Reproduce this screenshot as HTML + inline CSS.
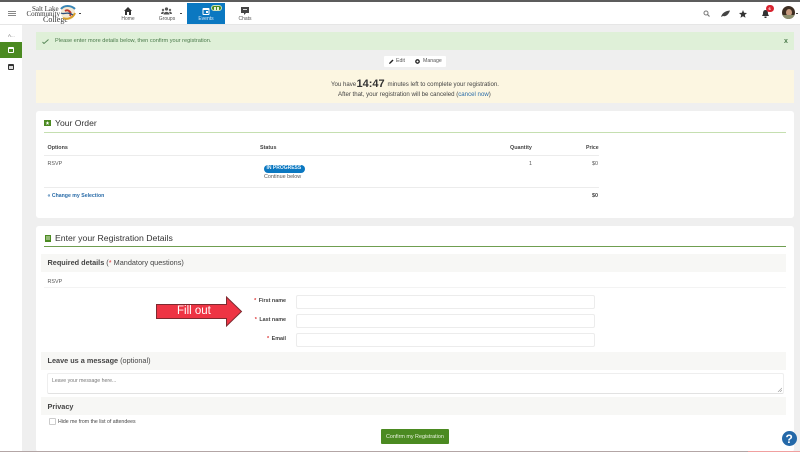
<!DOCTYPE html>
<html><head><meta charset="utf-8">
<style>
html,body{margin:0;padding:0;width:800px;height:452px;overflow:hidden;background:#efefef;font-family:"Liberation Sans",sans-serif;color:#333}
div,span,svg{position:absolute}
#w{left:0;top:0;width:800px;height:452px;overflow:hidden;filter:blur(.3px)}
.t{white-space:nowrap;line-height:1}
b{font-weight:bold}
i{font-style:normal}
.card{background:#fff;border-radius:3px}
.nl{font-size:5px;color:#555;transform:translateX(-50%)}
.sec{background:#f7f7f5;left:41px;width:745px}
.inp{background:#fff;border:1px solid #ececec;border-radius:2px;left:296px;width:297px;height:12px}
.lab{font-size:5.400px;font-weight:bold;color:#444;right:514px}
.lab i{color:#d33;margin-right:1px}
.s{font-size:5.400px}
</style></head><body><div id="w">
<div style="left:0;top:0;width:800px;height:24px;background:#fff"></div>
<div style="left:0;top:0;width:800px;height:2px;background:#5c5c5c"></div>
<div style="left:0;top:24px;width:800px;height:1px;background:#e6e6e6"></div>
<div style="left:8px;top:11px;width:8px;height:1px;background:#888"></div>
<div style="left:8px;top:13px;width:8px;height:1px;background:#888"></div>
<div style="left:8px;top:15px;width:8px;height:1px;background:#888"></div>

<div class="t" style="left:32px;top:4.500px;font:7px 'Liberation Serif',serif;color:#333">Salt Lake</div>
<div class="t" style="left:26.500px;top:9.500px;font:7px 'Liberation Serif',serif;color:#333">Community</div>
<div class="t" style="left:43px;top:15px;font:8px 'Liberation Serif',serif;color:#333">College</div>
<svg style="left:57.500px;top:3px" width="20" height="20" viewBox="0 0 20 20"><circle cx="10" cy="10" r="7" fill="#f3e9d4"/><path d="M3 6C6 2 13 2 17 6" stroke="#3a86b5" stroke-width="2" fill="none"/><path d="M5 15C9 17 15 15 17 10" stroke="#d9a02a" stroke-width="2" fill="none"/><path d="M7 8C10 6 14 9 12 13" stroke="#c0392b" stroke-width="2" fill="none"/><path d="M3 10C6 12 9 8 15 12" stroke="#2c4f7c" stroke-width="1.300" fill="none"/></svg>
<div style="left:79px;top:13px;width:2px;height:1px;background:#444"></div>

<svg style="left:124px;top:7px" width="8" height="8" viewBox="0 0 8 8"><path d="M4 0L8 4H7V8H5V5H3V8H1V4H0Z" fill="#333"/></svg>
<div class="t nl" style="left:128px;top:16.500px">Home</div>
<svg style="left:161px;top:7px" width="11" height="8" viewBox="0 0 11 8"><circle cx="5.500" cy="2" r="1.600" fill="#555"/><circle cx="2" cy="3" r="1.200" fill="#666"/><circle cx="9" cy="3" r="1.200" fill="#666"/><path d="M2.500 7.500C3 4 8 4 8.500 7.500ZM0 7C.3 4.500 2 4.500 3 5L2 7ZM11 7C10.700 4.500 9 4.500 8 5L9 7Z" fill="#555"/></svg>
<div class="t nl" style="left:167px;top:16.500px">Groups</div>
<div style="left:180px;top:13px;width:2px;height:1px;background:#444"></div>
<div style="left:187px;top:3px;width:38px;height:21px;background:#0b78c1"></div>
<svg style="left:202px;top:7px" width="8" height="8" viewBox="0 0 8 8"><rect x=".5" y="1" width="7" height="7" rx="1" fill="#fff"/><rect x="1.500" y="3" width="5" height="4" fill="#0b78c1"/><rect x="4" y="4" width="2" height="2" fill="#fff"/></svg>
<div style="left:211px;top:5px;width:11px;height:6px;border-radius:3px;background:#4d8a1e;border:.5px solid #cfe3bd;box-sizing:border-box"></div>
<div style="left:214px;top:6.500px;width:1.500px;height:3px;background:#e8f2dc"></div>
<div style="left:217px;top:6.500px;width:1.500px;height:3px;background:#e8f2dc"></div>
<div class="t nl" style="left:206px;top:16.500px;color:#dcecf7">Events</div>
<svg style="left:241px;top:7px" width="8" height="8" viewBox="0 0 8 8"><path d="M0 0H8V6H5L3 8V6H0Z" fill="#444"/><rect x="2" y="2" width="4" height="1" fill="#ddd"/></svg>
<div class="t nl" style="left:245px;top:16.500px">Chats</div>

<svg style="left:703px;top:10px" width="7" height="7" viewBox="0 0 7 7"><circle cx="3" cy="3" r="2" fill="none" stroke="#777" stroke-width="1"/><path d="M4.500 4.500L6.500 6.500" stroke="#777" stroke-width="1.200"/></svg>
<svg style="left:721px;top:10px" width="9" height="8" viewBox="0 0 9 8"><path d="M0 7C1 3 4 1 9 .5C8 4 5 7 2 6Z" fill="#444"/></svg>
<svg style="left:739px;top:10px" width="8" height="8" viewBox="0 0 8 8"><path d="M4 0L5.100 2.700L8 3L5.800 4.900L6.500 7.800L4 6.200L1.500 7.800L2.200 4.900L0 3L2.900 2.700Z" fill="#333"/></svg>
<svg style="left:762px;top:10px" width="7" height="8" viewBox="0 0 7 8"><path d="M3.500 0C6 0 6 2.500 6 4L7 6H0L1 4C1 2.500 1 0 3.500 0ZM2.500 6.500H4.500V8H2.500Z" fill="#333"/></svg>
<div style="left:766px;top:5px;width:8px;height:7px;border-radius:4px;background:#d8232f"></div>
<div class="t" style="left:768.500px;top:6.500px;font-size:4px;font-weight:bold;color:#fff">6</div>
<div style="left:782px;top:6px;width:13px;height:13px;border-radius:50%;background:#3d2e22;overflow:hidden"><div style="left:4px;top:3px;width:6px;height:7px;border-radius:50%;background:#c79a7e"></div><div style="left:0;top:9px;width:13px;height:4px;background:#8d8f6e"></div></div>
<div style="left:796px;top:13px;width:2px;height:1px;background:#444"></div>

<div style="left:0;top:25px;width:22px;height:427px;background:#fff"></div>
<div class="t" style="left:8px;top:33.500px;font-size:4.500px;color:#777">A...</div>
<div style="left:0;top:42px;width:22px;height:16px;background:#4b8a21"></div>
<svg style="left:8px;top:47px" width="6" height="6" viewBox="0 0 6 6"><rect width="6" height="6" rx="1" fill="#fff"/><rect x="1" y="2" width="4" height="3" fill="#4b8a21"/></svg>
<svg style="left:8px;top:63px" width="6" height="7" viewBox="0 0 6 7"><rect y="1" width="6" height="6" rx="1" fill="#333"/><rect x="1" y="3" width="4" height="3" fill="#ddd"/></svg>

<div style="left:36px;top:32px;width:758px;height:18px;background:#dff0d8"></div>
<svg style="left:42px;top:38.500px" width="7" height="5" viewBox="0 0 7 5"><path d="M.5 3L2 4.500L6.500.5" stroke="#5b8a5b" stroke-width="1" fill="none"/></svg>
<div class="t s" style="left:55px;top:39px;font-size:5.600px;color:#4a7a4a">Please enter more details below, then confirm your registration.</div>
<div class="t" style="left:784px;top:37.500px;font-size:7px;font-weight:bold;color:#4a7a4a">x</div>

<div style="left:384px;top:56px;width:62px;height:11px;background:#fff;border-radius:1px"></div>
<svg style="left:389px;top:59px" width="5" height="5" viewBox="0 0 5 5"><path d="M0 5L.5 3.500L3.500.5L4.500 1.500L1.500 4.500Z" fill="#222"/></svg>
<div class="t" style="left:396px;top:59px;font-size:5.200px;color:#555">Edit</div>
<svg style="left:415px;top:59px" width="5" height="5" viewBox="0 0 5 5"><circle cx="2.500" cy="2.500" r="1.700" fill="none" stroke="#222" stroke-width="1.300"/></svg>
<div class="t" style="left:423px;top:59px;font-size:5.200px;color:#555">Manage</div>

<div style="left:36px;top:70px;width:758px;height:33px;background:#fcf6e1"></div>
<div class="t" style="left:331px;top:81.800px;font-size:6.100px;color:#444">You have</div>
<div class="t" style="left:356.500px;top:79px;font-size:11px;font-weight:bold;color:#333">14:47</div>
<div class="t" style="left:387.500px;top:81.800px;font-size:6.100px;color:#444">minutes left to complete your registration.</div>
<div class="t" style="left:338px;top:91.500px;font-size:6.100px;color:#444">After that, your registration will be canceled (<span style="position:static;color:#2a6ca8">cancel now</span>)</div>

<div class="card" style="left:36px;top:111px;width:758px;height:107px"></div>
<svg style="left:44px;top:120px" width="7" height="6" viewBox="0 0 7 6"><rect width="7" height="6" fill="#4b8a21"/><path d="M3.500 1L4 2.500H5.500L4.300 3.400L4.800 5L3.500 4L2.200 5L2.700 3.400L1.500 2.500H3Z" fill="#fff"/></svg>
<div class="t" style="left:55px;top:118.500px;font-size:8.600px;color:#333">Your Order</div>
<div style="left:44px;top:131.500px;width:742px;height:1px;background:#c5dfb0"></div>
<div class="t s" style="left:47.500px;top:145.500px;font-weight:bold;color:#444">Options</div>
<div class="t s" style="left:260px;top:145.500px;font-weight:bold;color:#444">Status</div>
<div class="t s" style="left:510px;top:145.500px;font-weight:bold;color:#444">Quantity</div>
<div class="t s" style="left:586px;top:145.500px;font-size:5.200px;font-weight:bold;color:#444">Price</div>
<div style="left:44px;top:155px;width:555px;height:1px;background:#ececec"></div>
<div class="t s" style="left:47.500px;top:162px;color:#555">RSVP</div>
<div style="left:264px;top:165px;width:41px;height:7.500px;border-radius:4px;background:#0b78c1"></div>
<div class="t" style="left:266.500px;top:166.300px;font-size:5px;font-weight:bold;color:#e6f2fa">IN PROGRESS</div>
<div class="t s" style="left:264px;top:174.500px;color:#555">Continue below</div>
<div class="t s" style="left:529px;top:162px;color:#555">1</div>
<div class="t s" style="left:592px;top:162px;color:#555">$0</div>
<div style="left:44px;top:187px;width:555px;height:1px;background:#ececec"></div>
<div class="t" style="left:47.500px;top:194px;font-size:5.200px;font-weight:bold;color:#2a6ca8">« Change my Selection</div>
<div class="t s" style="left:592px;top:194px;font-weight:bold;color:#444">$0</div>

<div class="card" style="left:36px;top:226px;width:758px;height:226px"></div>
<svg style="left:45px;top:235px" width="6" height="7" viewBox="0 0 6 7"><rect width="6" height="7" fill="#4b8a21"/><rect x="1" y="1.500" width="4" height="1" fill="#dcebcd"/><rect x="1" y="3.500" width="4" height="1" fill="#dcebcd"/></svg>
<div class="t" style="left:55px;top:234px;font-size:8.700px;color:#333">Enter your Registration Details</div>
<div style="left:44px;top:246px;width:742px;height:1px;background:#6f9e50"></div>

<div class="sec" style="top:254px;height:18px"></div>
<div class="t" style="left:47.500px;top:259px;font-size:7.300px;color:#444"><b>Required details</b> (<i style="color:#d33">*</i> Mandatory questions)</div>
<div class="t s" style="left:47.500px;top:280px;color:#555">RSVP</div>
<div style="left:44px;top:287px;width:742px;height:1px;background:#f3f3f3"></div>

<svg style="left:155px;top:296px" width="89" height="31" viewBox="0 0 89 31"><path d="M1.500 8.500H71.500V1L86.500 15.500L71.500 30V22.500H1.500Z" fill="#ee3444" stroke="#7d2a30" stroke-width="1"/></svg>
<div class="t" style="left:177px;top:305.500px;font-size:11.500px;color:#fff">Fill out</div>

<div class="t lab" style="top:298.500px"><i>*</i> First name</div>
<div class="inp" style="top:295px"></div>
<div class="t lab" style="top:318px"><i>*</i> Last name</div>
<div class="inp" style="top:314px"></div>
<div class="t lab" style="top:337px"><i>*</i> Email</div>
<div class="inp" style="top:333px"></div>

<div class="sec" style="top:352px;height:18px"></div>
<div class="t" style="left:47.500px;top:357px;font-size:7.300px;color:#444"><b>Leave us a message</b> (optional)</div>
<div style="left:47px;top:373px;width:735px;height:19px;background:#fff;border:1px solid #eee;border-bottom:1px solid #e2e2e2;border-radius:2px"></div>
<div class="t" style="left:52px;top:378.500px;font-size:5.200px;color:#777">Leave your message here...</div>
<svg style="left:777px;top:387px" width="5" height="5" viewBox="0 0 5 5"><path d="M1 5L5 1M3 5L5 3" stroke="#999" stroke-width=".6"/></svg>

<div class="sec" style="top:397px;height:18px"></div>
<div class="t" style="left:47.500px;top:402.500px;font-size:7.300px;font-weight:bold;color:#444">Privacy</div>
<div style="left:49px;top:418px;width:5px;height:5px;border:1px solid #ccc;border-radius:1px;background:#fff"></div>
<div class="t" style="left:58px;top:420px;font-size:5.200px;color:#444">Hide me from the list of attendees</div>

<div style="left:381px;top:429px;width:68px;height:15px;background:#4b8a21;border-radius:1px"></div>
<div class="t s" style="left:386px;top:435px;color:#eaf3e0">Confirm my Registration</div>

<div style="left:782px;top:431px;width:15px;height:15px;border-radius:50%;background:#2468a8"></div>
<div class="t" style="left:785.500px;top:432.500px;font-size:12px;font-weight:bold;color:#fff">?</div>

<div style="left:0;top:451px;width:800px;height:1px;background:#b3a6a6"></div>
<div style="left:748px;top:451px;width:52px;height:1px;background:#f0a0a0"></div>
</div></body></html>
